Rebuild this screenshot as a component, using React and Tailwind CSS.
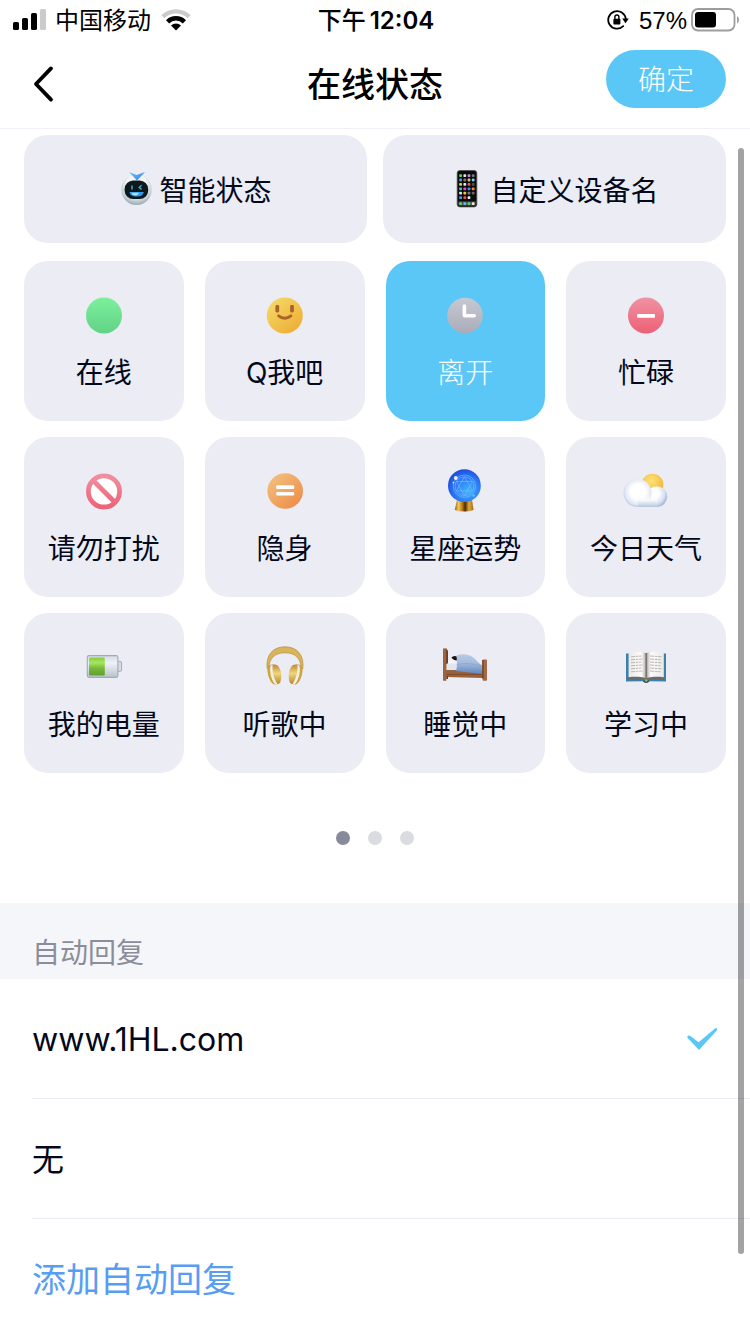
import { useState } from "react";

function SignalIcon() {
  return (
    <svg viewBox="0 0 34 22" className="h-[22px] w-[34px]" aria-hidden="true">
      <rect x="0" y="13" width="6" height="8" rx="1.6" />
      <rect x="9" y="9" width="6" height="12" rx="1.6" />
      <rect x="18" y="4" width="6" height="17" rx="1.6" />
      <rect x="27" y="0" width="6" height="21" rx="1.6" fill="#cbcbcb" />
    </svg>
  );
}

function WifiIcon() {
  return (
    <svg viewBox="0 0 30 22" className="h-[22px] w-[30px]" aria-hidden="true">
      <path d="M0.3 6.2 A21 21 0 0 1 29.7 6.2 L26.6 9.2 A16.6 16.6 0 0 0 3.4 9.2 Z" fill="#cbcbcb" />
      <path d="M5 11.2 A14.2 14.2 0 0 1 25 11.2 L21.8 14.4 A9.6 9.6 0 0 0 8.2 14.4 Z" />
      <path d="M10 16.4 A7.2 7.2 0 0 1 20 16.4 L15 21.6 Z" />
    </svg>
  );
}

function RotationLockIcon() {
  return (
    <svg viewBox="0 0 22 20" className="h-5 w-[22px]" aria-hidden="true">
      <path d="M16.2 16.2 A8.8 8.8 0 1 1 18.8 9" fill="none" stroke="#000" strokeWidth="1.8" strokeLinecap="round" />
      <path d="M15.2 8.4 H21.8 L18.5 13.2 Z" />
      <rect x="6.4" y="8.8" width="7" height="5.6" rx="0.9" />
      <path d="M7.9 9 V7 A2 2 0 0 1 11.9 7 V9" fill="none" stroke="#000" strokeWidth="1.4" />
    </svg>
  );
}

function BatteryStatusIcon() {
  return (
    <svg viewBox="0 0 48 24" className="h-6 w-12" aria-hidden="true">
      <rect x="1" y="1" width="42.5" height="21.5" rx="6" fill="none" stroke="#9d9d9d" strokeWidth="1.8" />
      <rect x="4" y="4" width="21" height="15.5" rx="3" />
      <path d="M46 8 Q48 9.3 48 11.7 Q48 14.2 46 15.5 Z" fill="#9d9d9d" />
    </svg>
  );
}

function RobotIcon() {
  return (
    <svg viewBox="0 0 36 38" className="h-[38px] w-9" aria-hidden="true">
      <defs>
        <radialGradient id="robotBody" cx="0.5" cy="0.35" r="0.65">
          <stop offset="0.5" stopColor="#f4f4f2" />
          <stop offset="0.8" stopColor="#c6d0d5" />
          <stop offset="1" stopColor="#93a9b4" />
        </radialGradient>
        <linearGradient id="robotEar" x1="0" y1="0" x2="1" y2="1">
          <stop offset="0" stopColor="#6cc4ff" />
          <stop offset="1" stopColor="#2d7df5" />
        </linearGradient>
      </defs>
      <ellipse cx="17.5" cy="19.5" rx="15.2" ry="15.5" fill="url(#robotBody)" />
      <rect x="5.6" y="10.6" width="23.6" height="18.4" rx="8.6" fill="#0c1a20" />
      <path d="M10 2 L17.5 5 L26 2 L18 10.4 Z" fill="url(#robotEar)" />
      <path d="M13 15.5 V19.4" stroke="#4ba7b5" strokeWidth="1.5" fill="none" />
      <path d="M22.6 15.3 L20.2 17.4 L22.6 19.4" stroke="#4ba7b5" strokeWidth="1.4" fill="none" />
      <path d="M10.4 22 H24.8 Q24 26.6 17.6 26.6 Q11.2 26.6 10.4 22 Z" fill="#2f9bf5" />
      <path d="M12.5 22.8 H20 Q19 25.6 16 25.6 Q13 25.2 12.5 22.8 Z" fill="#a5e2ff" />
    </svg>
  );
}

const appColors = [
  ["#5fd35f", "#e8e8e8", "#c48be0", "#777777"],
  ["#3aa0f0", "#777777", "#e8b98a", "#6cd0e8"],
  ["#f0d04a", "#e8e8e8", "#e8584a", "#555555"],
  ["#49c5c0", "#d44ae0", "#3a90f0", "#f08a24"],
  ["#e8e8e8", "#f0c83a", "#777777", "#666666"],
  ["#3aa0f0", "#e8584a", "#e8e8e8", "#0b0b0b"],
];

const dockColors = ["#5fd35f", "#6ab8f5", "#5fd36f", "#e8e8e8"];

function PhoneIcon() {
  return (
    <svg viewBox="0 0 36 38" className="h-[38px] w-9" aria-hidden="true">
      <rect x="7.2" y="0.5" width="19.6" height="36.4" rx="2.6" fill="#0b0b0b" stroke="#57514d" strokeWidth="0.8" />
      <rect x="8.4" y="31.4" width="17.2" height="4.2" fill="#4b504c" />
      {appColors.map((row, r) =>
        row.map((color, c) => (
          <rect key={`${r}-${c}`} x={9.2 + c * 4.2} y={4.2 + r * 4.4} width="2.8" height="2.8" rx="0.8" fill={color} />
        ))
      )}
      {dockColors.map((color, c) => (
        <rect key={color} x={9.2 + c * 4.2} y="32.2" width="2.8" height="2.8" rx="0.8" fill={color} />
      ))}
    </svg>
  );
}

function Icon({ children }) {
  return (
    <svg viewBox="0 0 48 48" className="size-12 shrink-0" fill="none" aria-hidden="true">
      {children}
    </svg>
  );
}

function OnlineIcon() {
  return (
    <Icon>
      <linearGradient id="online" x1="0" y1="0" x2="0" y2="1">
        <stop stopColor="#7cf09b" />
        <stop offset="1" stopColor="#62d288" />
      </linearGradient>
      <circle cx="24" cy="23.5" r="18" fill="url(#online)" />
    </Icon>
  );
}

function SmileIcon() {
  return (
    <Icon>
      <linearGradient id="smile" x1="0.15" y1="0.1" x2="0.85" y2="0.9">
        <stop stopColor="#f5d763" />
        <stop offset="1" stopColor="#edaf37" />
      </linearGradient>
      <circle cx="23.8" cy="23.5" r="18" fill="url(#smile)" />
      <rect x="14.4" y="13" width="3.8" height="7.4" rx="1.4" fill="#a9632c" />
      <rect x="29.1" y="13" width="3.8" height="7.4" rx="1.4" fill="#a9632c" />
      <path d="M17.6 23.8 Q23.7 28.6 29.9 23.8" stroke="#a9632c" strokeWidth="2.8" strokeLinecap="round" />
    </Icon>
  );
}

function AwayIcon() {
  return (
    <Icon>
      <linearGradient id="away" x1="0" y1="0" x2="0" y2="1">
        <stop stopColor="#c6c8d2" />
        <stop offset="1" stopColor="#aaadb9" />
      </linearGradient>
      <circle cx="24" cy="23.5" r="17.8" fill="url(#away)" />
      <path d="M23.4 14 V23.8 H33.2" stroke="#fff" strokeWidth="3.6" strokeLinecap="round" strokeLinejoin="round" />
    </Icon>
  );
}

function RedGradient({ id }) {
  return (
    <linearGradient id={id} gradientUnits="userSpaceOnUse" x1="24" y1="5" x2="24" y2="42">
      <stop stopColor="#f093a3" />
      <stop offset="1" stopColor="#ed5f75" />
    </linearGradient>
  );
}

function BusyIcon() {
  return (
    <Icon>
      <RedGradient id="busy" />
      <circle cx="24" cy="23.5" r="18" fill="url(#busy)" />
      <rect x="15" y="22" width="18" height="3.8" rx="1" fill="#fff" />
    </Icon>
  );
}

function DoNotDisturbIcon() {
  return (
    <Icon>
      <RedGradient id="dnd" />
      <circle cx="24" cy="23.4" r="15.6" fill="#fff" stroke="url(#dnd)" strokeWidth="4.8" />
      <path d="M13.4 12.8 L34.6 34" stroke="url(#dnd)" strokeWidth="4.8" />
    </Icon>
  );
}

function InvisibleIcon() {
  return (
    <Icon>
      <linearGradient id="invisible" x1="0.15" y1="0.1" x2="0.85" y2="0.9">
        <stop stopColor="#f3bc7c" />
        <stop offset="1" stopColor="#ee8f4a" />
      </linearGradient>
      <circle cx="24.2" cy="23" r="17.8" fill="url(#invisible)" />
      <rect x="15.2" y="17.3" width="18" height="3.6" rx="1" fill="#fff" />
      <rect x="15.2" y="24" width="18" height="3.6" rx="1" fill="#fff" />
    </Icon>
  );
}

function CrystalBallIcon() {
  return (
    <Icon>
      <defs>
        <radialGradient id="ball" cx="0.6" cy="0.65" r="0.65">
          <stop stopColor="#3fb4fb" />
          <stop offset="0.6" stopColor="#2c7af6" />
          <stop offset="1" stopColor="#1f4fe0" />
        </radialGradient>
        <linearGradient id="ballBase" x1="0" y1="0" x2="1" y2="0">
          <stop stopColor="#9a5f14" />
          <stop offset="0.2" stopColor="#f3c659" />
          <stop offset="0.4" stopColor="#b67a1e" />
          <stop offset="0.55" stopColor="#4a2a08" />
          <stop offset="0.75" stopColor="#e0a93c" />
          <stop offset="1" stopColor="#a06a1a" />
        </linearGradient>
      </defs>
      <path d="M16 31.5 H31 L32.6 42 Q24 45 13.8 42 Z" fill="url(#ballBase)" />
      <circle cx="23.4" cy="17.7" r="16.4" fill="url(#ball)" />
      <g stroke="#7cc0fd" strokeWidth="0.7" opacity="0.85">
        <circle cx="23.4" cy="18.2" r="11.2" />
        <circle cx="23.4" cy="18.2" r="9.4" />
        <path d="M23.4 8.8 L31.5 22.9 H15.3 Z" />
        <path d="M23.4 27.6 L15.3 13.5 H31.5 Z" />
      </g>
      <circle cx="14.8" cy="10" r="1.9" fill="#e9f4ff" />
      <circle cx="12.4" cy="14.6" r="0.9" fill="#cfe6ff" />
      <circle cx="32.6" cy="27.6" r="1.1" fill="#62d4ff" />
    </Icon>
  );
}

function WeatherIcon() {
  return (
    <Icon>
      <defs>
        <radialGradient id="sun" cx="0.45" cy="0.3" r="0.7">
          <stop stopColor="#ffe37a" />
          <stop offset="1" stopColor="#efb02f" />
        </radialGradient>
        <radialGradient id="cloudBig" cx="0.52" cy="0.45" r="0.58">
          <stop offset="0.45" stopColor="#fff" />
          <stop offset="0.8" stopColor="#e2e9f4" />
          <stop offset="1" stopColor="#b3c3dd" />
        </radialGradient>
        <radialGradient id="cloudSmall" cx="0.35" cy="0.35" r="0.7">
          <stop offset="0.35" stopColor="#fff" />
          <stop offset="0.75" stopColor="#d6e0ef" />
          <stop offset="1" stopColor="#9fb3d6" />
        </radialGradient>
        <linearGradient id="cloudJoin" x1="0" y1="0" x2="0" y2="1">
          <stop stopColor="#fff" stopOpacity="0" />
          <stop offset="0.5" stopColor="#f6f8fc" />
          <stop offset="1" stopColor="#b6c5de" />
        </linearGradient>
      </defs>
      <circle cx="30.4" cy="16.8" r="11" fill="url(#sun)" />
      <circle cx="34.8" cy="28.6" r="10.4" fill="url(#cloudSmall)" />
      <circle cx="15.6" cy="25" r="14" fill="url(#cloudBig)" />
      <path d="M16 26 H35 V39 H16 Z" fill="url(#cloudJoin)" />
    </Icon>
  );
}

function BatteryIcon() {
  return (
    <Icon>
      <defs>
        <linearGradient id="cell" x1="0" y1="0" x2="0" y2="1">
          <stop stopColor="#d3dbe3" />
          <stop offset="0.35" stopColor="#eef2f6" />
          <stop offset="1" stopColor="#b8c1cb" />
        </linearGradient>
        <linearGradient id="charge" x1="0" y1="0" x2="0" y2="1">
          <stop stopColor="#83cf3d" />
          <stop offset="0.3" stopColor="#a5e563" />
          <stop offset="0.6" stopColor="#76b83a" />
          <stop offset="1" stopColor="#5fa02e" />
        </linearGradient>
      </defs>
      <rect x="37" y="17.4" width="4.6" height="10" rx="1.6" fill="#d5dbe2" stroke="#a5adb7" strokeWidth="1" />
      <rect x="7.3" y="11.6" width="30.6" height="21.8" rx="1.8" fill="url(#cell)" stroke="#a5a9b3" strokeWidth="1.1" />
      <rect x="9" y="13.4" width="15.8" height="18.2" rx="1.4" fill="url(#charge)" />
    </Icon>
  );
}

function EarCup() {
  return (
    <>
      <path d="M7.5 22 C10 20 14.5 20.2 16.4 21.2 C20.6 25.4 21.2 33 19.2 38.4 C17.5 40.4 14 40.8 12.4 40 C8 37 5 27 7.5 22 Z" fill="url(#ear)" />
      <path d="M9.4 21.4 L11.6 21 C11 27.6 13 35.4 16.6 40.2 L14 40.4 C10.2 35.6 8.2 28 9.4 21.4 Z" fill="#f1eee6" />
      <path d="M7.5 22 L9.4 21.4 C8.2 28 10.2 35.6 14 40.4 L12.4 40 C8 36.4 5 27 7.5 22 Z" fill="#cfa345" />
    </>
  );
}

function HeadphonesIcon() {
  return (
    <Icon>
      <defs>
        <linearGradient id="ear" x1="0" y1="0" x2="0" y2="1">
          <stop stopColor="#b98b35" />
          <stop offset="0.45" stopColor="#f2d67a" />
          <stop offset="1" stopColor="#b5862f" />
        </linearGradient>
      </defs>
      <path d="M6.2 25 C4.5 11 12 2.8 24 2.8 C36 2.8 43.5 11 41.8 25 L40.2 25 C40 14 34 8.8 24 8.8 C14 8.8 8 14 7.8 25 Z" fill="#d9b45c" stroke="#b98e3c" strokeWidth="0.7" />
      <EarCup />
      <g transform="translate(48 0) scale(-1 1)">
        <EarCup />
      </g>
    </Icon>
  );
}

function BedIcon() {
  return (
    <Icon>
      <defs>
        <linearGradient id="blanket" x1="0" y1="0" x2="0" y2="1">
          <stop stopColor="#b9cbe6" />
          <stop offset="0.45" stopColor="#a3bbdd" />
          <stop offset="1" stopColor="#5f87bd" />
        </linearGradient>
      </defs>
      <rect x="5" y="19" width="12" height="8" fill="#dfe6f1" />
      <path d="M5 18.4 Q8 14.8 13 15.6 L15.6 19.6 H5.4 Z" fill="#f3f5f9" />
      <path d="M10.4 13.8 Q12 11.4 15.8 12.4 V16.6 Q12.5 16.4 10.4 13.8 Z" fill="#17130f" />
      <path d="M5 26 H42 V34 L5 33 Z" fill="#99603c" />
      <path d="M5 30.4 H42" stroke="#7a482a" strokeWidth="0.8" />
      <path d="M15.6 11.4 C22 9 30 10.6 34.6 15.4 C37.6 18.6 39 20.6 41.4 21 V30 L15.2 27 C16.2 22 16.4 16 15.6 11.4 Z" fill="url(#blanket)" />
      <path d="M15.8 20.4 C25 18.6 34 20 41.4 22.4" stroke="#8eaad2" strokeWidth="1" />
      <path d="M2 4.6 L5.4 4.2 L7 7 V19 L5.4 20 V36.8 H2 Z" fill="#9d6440" />
      <path d="M5.2 5 L7 7.2 V19 L5.2 20 Z" fill="#6c3f24" />
      <rect x="5.4" y="32" width="1.6" height="3" fill="#6c3f24" />
      <rect x="41.6" y="15.4" width="4.4" height="21.4" rx="0.8" fill="#a36a45" />
      <rect x="41.2" y="16" width="1.4" height="18.6" fill="#6f4226" />
    </Icon>
  );
}

function BookIcon() {
  const lines = [14, 17, 20, 23, 26, 29];
  return (
    <Icon>
      <defs>
        <linearGradient id="pageLeft" x1="0" y1="0" x2="1" y2="0">
          <stop stopColor="#eceae7" />
          <stop offset="0.75" stopColor="#fbfaf8" />
          <stop offset="1" stopColor="#a9a7a4" />
        </linearGradient>
        <linearGradient id="pageRight" x1="0" y1="0" x2="1" y2="0">
          <stop stopColor="#a9a7a4" />
          <stop offset="0.25" stopColor="#fbfaf8" />
          <stop offset="1" stopColor="#eceae7" />
        </linearGradient>
      </defs>
      <path d="M4 9.4 L44 9.4 V37.6 L27.5 37.2 Q24.2 40.4 20.8 37.2 L4 37.6 Z" fill="#3d80ad" />
      <path d="M5.6 34.2 L6.6 32 H41.4 L42.6 34.2 L42.4 36 L25 35.6 H23.5 L6 36 Z" fill="#6d6b69" />
      <path d="M6.6 9 C12 7.4 19 7 24.2 9 V34.2 C18 32.4 12 32.6 6.6 33.2 Z" fill="url(#pageLeft)" />
      <path d="M41.8 9 C36.4 7.4 29.4 7 24.2 9 V34.2 C30.4 32.4 36.4 32.6 41.8 33.2 Z" fill="url(#pageRight)" />
      <path d="M24.3 9 V34.4" stroke="#77736f" strokeWidth="1.6" />
      {lines.map((y, i) => (
        <g key={y} stroke="#a9a6a3" strokeWidth="0.8" strokeDasharray="4 0.8 2.6 0.7">
          <path d={`M9 ${y - 1.2} L${i % 2 ? 20.5 : 19.4} ${y - 2}`} />
          <path d={`M28 ${y - 2} L${i % 2 ? 38.6 : 39.6} ${y - 1.2}`} />
        </g>
      ))}
      <path d="M21.4 36.6 Q24.2 39.6 27 36.6" stroke="#2e6048" strokeWidth="1.6" />
      <circle cx="24.2" cy="36.4" r="1.2" fill="#c3a63d" />
    </Icon>
  );
}

const statuses = [
  ["在线", OnlineIcon],
  ["Q我吧", SmileIcon],
  ["离开", AwayIcon],
  ["忙碌", BusyIcon],
  ["请勿打扰", DoNotDisturbIcon],
  ["隐身", InvisibleIcon],
  ["星座运势", CrystalBallIcon],
  ["今日天气", WeatherIcon],
  ["我的电量", BatteryIcon],
  ["听歌中", HeadphonesIcon],
  ["睡觉中", BedIcon],
  ["学习中", BookIcon],
];

const features = [
  ["智能状态", RobotIcon],
  ["自定义设备名", PhoneIcon],
];

const replies = ["www.1HL.com", "无"];

function StatusBar() {
  return (
    <div className="grid h-10 grid-cols-[1fr_auto_1fr] items-center pr-[11px] pl-[13px] text-2xl text-black">
      <div className="flex items-center">
        <SignalIcon />
        <span className="ml-2 pt-[2px]">中国移动</span>
        <span className="ml-[10px]">
          <WifiIcon />
        </span>
      </div>
      <div className="flex items-center gap-1 pt-[2px] font-semibold">
        <span className="font-medium">下午</span>
        <span>12:04</span>
      </div>
      <div className="flex items-center justify-end">
        <RotationLockIcon />
        <span className="ml-[10px] pt-[2px] font-['Liberation_Sans',sans-serif]">57%</span>
        <span className="ml-1">
          <BatteryStatusIcon />
        </span>
      </div>
    </div>
  );
}

export default function App() {
  const [status, setStatus] = useState("离开");
  const [reply, setReply] = useState("www.1HL.com");
  const [page, setPage] = useState(0);

  return (
    <div className="flex min-h-screen flex-col bg-white font-[Inter,'Noto_Sans_CJK_SC',sans-serif] text-[#03081a]">
      <StatusBar />
      <header className="grid h-[89px] grid-cols-[1fr_auto_1fr] items-start border-b border-[#f0f0f6] px-6 pt-[10px] text-black">
        <button type="button" aria-label="返回" className="flex h-[68px] w-12 items-center pl-2">
          <svg viewBox="0 0 22 38" className="h-[38px] w-[22px]" fill="none" aria-hidden="true">
            <path d="M19 3.4 L4 19 L19 34.6" stroke="#000" strokeWidth="3.8" strokeLinecap="round" strokeLinejoin="round" />
          </svg>
        </button>
        <h1 className="text-[34px] leading-[70px] font-medium">在线状态</h1>
        <button type="button" className="h-[58px] w-[120px] justify-self-end rounded-full bg-[#5bc7f7] pt-[2px] text-[28px] font-light text-white">
          确定
        </button>
      </header>

      <main className="relative flex-1">
        <div className="px-6 pt-[6px]">
          <div className="grid grid-cols-2 gap-4 text-[28px]">
            {features.map(([name, FeatureIcon]) => (
              <button key={name} type="button" className="flex h-[108px] items-center justify-center gap-1 rounded-3xl bg-[#ebecf4]">
                <FeatureIcon />
                <span className="pt-[3px]">{name}</span>
              </button>
            ))}
          </div>
          <div className="mt-[18px] grid grid-cols-4 gap-x-[21px] gap-y-4">
            {statuses.map(([name, StatusIcon]) => (
              <button
                key={name}
                type="button"
                aria-pressed={status === name}
                onClick={() => setStatus(name)}
                className={`flex h-40 flex-col items-center gap-[13px] rounded-3xl pt-[31px] text-[28px] leading-10 ${
                  status === name ? "bg-[#5bc7f7] font-light text-white" : "bg-[#ebecf4]"
                }`}
              >
                <StatusIcon />
                {name}
              </button>
            ))}
          </div>
          <div className="flex justify-center gap-[18px] py-[58px]">
            {[0, 1, 2].map((i) => (
              <button
                key={i}
                type="button"
                aria-label={`第${i + 1}页`}
                onClick={() => setPage(i)}
                className={`size-[14px] rounded-full ${page === i ? "bg-[#878b99]" : "bg-[#dbdce1]"}`}
              />
            ))}
          </div>
        </div>

        <fieldset>
          <legend className="w-full bg-[#f5f6fa] px-8 pt-6 text-[28px] leading-[52px] text-[#8b8d98]">自动回复</legend>
          {replies.map((text) => (
            <label key={text} className="ml-8 flex h-[120px] items-center justify-between border-b border-[#ebecf4] pr-8 text-[32px]">
              <span className="pt-[3px]">{text}</span>
              <input
                type="radio"
                name="auto-reply"
                value={text}
                checked={reply === text}
                onChange={() => setReply(text)}
                className="peer sr-only"
              />
              <svg viewBox="0 0 32 24" className="hidden h-6 w-8 peer-checked:block" aria-hidden="true">
                <path d="M1.4 9.4 Q2.6 7.6 4.4 9 L12.6 15.2 L29 1.6 Q30.6 0.4 31.2 2 Q31.6 2.8 30.8 3.6 L13 23 L1.8 11.2 Q1 10.2 1.4 9.4 Z" fill="#5bc7f7" />
              </svg>
            </label>
          ))}
        </fieldset>
        <button type="button" className="ml-8 h-[115px] pt-[6px] text-[34px] text-[#579df2]">
          添加自动回复
        </button>
        <div className="absolute top-[19px] right-[6px] bottom-20 w-[6px] rounded-full bg-black/36" />
      </main>
    </div>
  );
}
